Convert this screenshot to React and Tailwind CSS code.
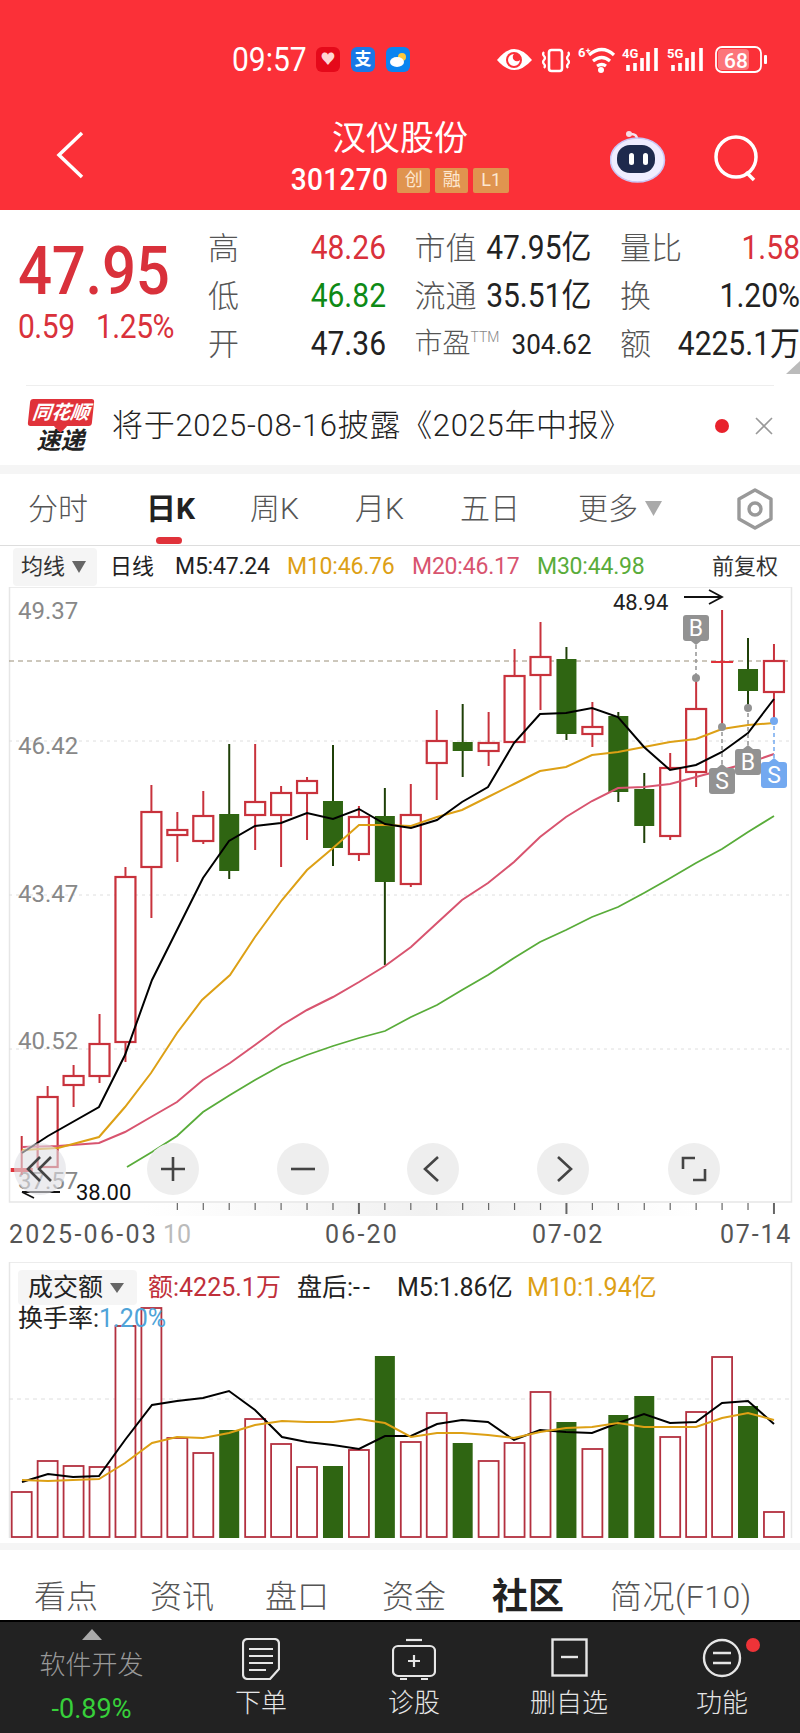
import React from "react";

const RED = "#C8323C";
const GREEN = "#2F6512";

// wick top, body top, body bottom, wick bottom, colour
const candles = [
  [1136, 1168, 1172, 1175, "r"],
  [1086, 1097, 1167, 1167, "r"],
  [1065, 1076, 1085, 1107, "r"],
  [1014, 1044, 1076, 1083, "r"],
  [867, 877, 1042, 1062, "r"],
  [785, 812, 867, 918, "r"],
  [812, 830, 835, 862, "r"],
  [791, 816, 841, 844, "r"],
  [744, 814, 871, 879, "g"],
  [744, 802, 815, 850, "r"],
  [786, 793, 815, 867, "r"],
  [777, 781, 793, 840, "r"],
  [745, 801, 848, 866, "g"],
  [806, 817, 854, 861, "r"],
  [788, 816, 882, 965, "g"],
  [784, 815, 884, 887, "r"],
  [710, 741, 763, 800, "r"],
  [704, 742, 751, 777, "g"],
  [712, 743, 751, 766, "r"],
  [649, 676, 742, 742, "r"],
  [622, 657, 675, 710, "r"],
  [647, 659, 734, 740, "g"],
  [702, 727, 734, 747, "r"],
  [712, 716, 792, 802, "g"],
  [773, 789, 826, 843, "g"],
  [753, 768, 836, 840, "r"],
  [678, 709, 772, 787, "r"],
  [610, 661, 663, 727, "r"],
  [638, 669, 691, 708, "g"],
  [644, 661, 692, 720, "r"],
];

const volumes = [
  1492, 1461, 1466, 1467, 1326, 1308, 1438, 1453, 1430, 1419, 1444, 1467, 1466, 1450, 1356,
  1442, 1413, 1443, 1461, 1443, 1392, 1422, 1449, 1415, 1396, 1437, 1412, 1357, 1406, 1512,
];

const ma5 = "22,1153 48,1136 99,1107 125,1055 152,980 203,878 229,841 255,826 281,823 307,813 333,819 359,809 385,824 411,828 437,820 462,802 488,787 514,743 540,714 566,713 592,708 618,717 644,747 670,770 696,765 722,752 748,733 774,699";
const ma10 = "22,1150 58,1148 99,1137 125,1107 151,1073 177,1033 202,1000 230,975 255,937 282,900 307,870 333,848 359,825 385,825 411,826 437,817 462,810 488,797 514,784 540,771 566,767 592,755 618,752 644,747 670,742 696,739 722,729 748,725 774,723";
const ma20 = "22,1147 58,1146 99,1143 125,1132 151,1117 177,1102 203,1080 230,1063 255,1045 282,1025 307,1010 333,997 359,982 385,966 411,947 437,923 462,900 488,883 514,862 540,837 566,817 592,801 618,788 644,787 670,784 696,777 722,770 748,763 774,754";
const ma30 = "127,1167 152,1152 177,1136 203,1112 230,1095 255,1080 282,1065 307,1055 333,1046 359,1038 385,1031 411,1017 437,1005 462,990 488,975 514,958 540,942 566,930 592,917 618,907 644,893 667,880 696,863 722,849 748,832 774,816";
const volMa5 = "22,1482 48,1474 73,1477 99,1476 125,1440 152,1405 177,1401 203,1398 229,1391 255,1410 282,1437 307,1442 333,1445 359,1449 385,1436 411,1436 437,1424 462,1420 488,1422 514,1440 540,1430 566,1432 592,1433 618,1423 644,1414 670,1423 696,1422 722,1403 748,1401 774,1424";
const volMa10 = "22,1480 48,1481 73,1480 99,1479 125,1463 152,1443 177,1437 203,1438 229,1433 255,1425 282,1421 307,1422 333,1422 359,1419 385,1423 411,1437 437,1433 462,1433 488,1435 514,1438 540,1432 566,1428 592,1427 618,1423 644,1427 670,1427 696,1427 722,1418 748,1413 774,1420";

const cx = (i) => 21.7 + 25.94 * i;

const Signal = ({ x, label }) => (
  <g>
    <text x={x} y="58" fontSize="13" fontWeight="700" fill="#fff" stroke="none">{label}</text>
    <path
      d={`M${x + 6} 71v-6M${x + 13} 71v-8M${x + 20} 71v-13M${x + 26} 71v-19M${x + 34} 71v-23`}
      strokeWidth="3.6"
    />
  </g>
);

const StatusBar = () => (
  <div className="flex h-[120px] items-center pl-[232px] pb-[1px]">
    <span className="inline-block w-[84px] origin-center scale-y-[1.12] text-[30px] leading-none text-white">09:57</span>
    <div className="flex gap-[11px]">
      <div className="flex h-[25px] w-[24px] items-center justify-center rounded-[6px] bg-[#E5091A] text-[15px] leading-none text-[#ffd5d5]">♥</div>
      <div className="flex h-[25px] w-[24px] items-center justify-center rounded-[6px] bg-[#1A78E6] text-[17px] font-bold leading-none text-white">支</div>
      <div className="flex h-[25px] w-[24px] items-center justify-center rounded-[6px] bg-[#0A84F0]">
        <svg width="18" height="16" viewBox="0 0 18 16">
          <circle cx="13" cy="5" r="4" fill="#FFC93C" />
          <ellipse cx="8" cy="10" rx="7" ry="5" fill="#fff" />
        </svg>
      </div>
    </div>
    <svg className="ml-[87px]" width="272" height="30" viewBox="497 45 272 30" fill="none" stroke="#fff">
      {/* eye */}
      <path d="M497 60 Q514 38 532 60 Q514 80 497 60Z" fill="#fff" stroke="none" />
      <circle cx="514" cy="60" r="8" fill="#FB3038" stroke="none" />
      <path d="M514 54a6 6 0 1 0 6 6a4 4 0 0 1-6-6Z" fill="#fff" stroke="none" />
      {/* vibrate */}
      <rect x="549" y="50" width="13" height="21" rx="2.5" strokeWidth="2.6" />
      <path d="M544 52q-2 2 0 4q2 2 0 4q-2 2 0 4q2 2 0 4M568 52q2 2 0 4q-2 2 0 4q2 2 0 4q-2 2 0 4" strokeWidth="2.2" />
      {/* wifi */}
      <text x="578" y="57" fontSize="13" fontWeight="700" fill="#fff" stroke="none">6⁺</text>
      <path d="M589 55q13-11 25 0M593 61q9-7 17 0M597 66q5-3 9 0" strokeWidth="3.2" />
      <circle cx="601" cy="70" r="3" fill="#fff" stroke="none" />
      <Signal x={622} label="4G" />
      <Signal x={667} label="5G" />
      {/* battery */}
      <rect x="716" y="47" width="45" height="25" rx="6" strokeWidth="1.8" />
      <rect x="718" y="49" width="31" height="21" rx="4" fill="#ffffff55" stroke="none" />
      <text x="724" y="68" fontSize="21" fontWeight="500" fill="#fff" stroke="none">68</text>
      <rect x="764" y="55" width="3" height="9" rx="1" fill="#fff" stroke="none" />
    </svg>
  </div>
);

const TitleBar = () => (
  <div className="relative flex h-[90px] flex-col items-center">
    <svg className="absolute left-[55px] top-[10px]" width="30" height="50" viewBox="0 0 30 50" fill="none" stroke="#fff" strokeWidth="3.5">
      <path d="M27 3 L4 25 L27 47" />
    </svg>
    <div className="text-[34px] leading-[36px] text-white">汉仪股份</div>
    <div className="mt-[10px] flex items-center">
      <span className="mr-[9px] inline-block scale-y-[1.1] text-[28px] font-medium leading-[28px] tracking-[0.3px] text-[#fff]">301270</span>
      <span className="mr-[5px] flex h-[25px] w-[33px] items-center justify-center rounded-[2px] bg-[#E0944F] text-[18px] leading-none text-[#fde7d0]">创</span>
      <span className="mr-[5px] flex h-[25px] w-[33px] items-center justify-center rounded-[2px] bg-[#E0944F] text-[18px] leading-none text-[#fde7d0]">融</span>
      <span className="flex h-[25px] w-[36px] items-center justify-center rounded-[2px] bg-[#E0944F] text-[18px] leading-none text-[#fde7d0]">L1</span>
    </div>
    {/* robot */}
    <svg className="absolute left-[610px] top-[11px]" width="56" height="52" viewBox="0 0 56 52">
      <path d="M27 8 Q27 3 21 3" stroke="#F3E6F3" strokeWidth="2.4" fill="none" />
      <circle cx="19" cy="3" r="3" fill="#F6DDE6" />
      <ellipse cx="27.5" cy="29" rx="27" ry="22" fill="#EFEDFF" />
      <ellipse cx="27.5" cy="29" rx="27" ry="22" fill="none" stroke="#C9C6F5" strokeWidth="1.5" />
      <rect x="7" y="14" width="38" height="28" rx="13" fill="#1E2A4D" />
      <rect x="19" y="22" width="5" height="12" rx="2.5" fill="#fff" />
      <rect x="33" y="22" width="5" height="12" rx="2.5" fill="#fff" />
    </svg>
    {/* search */}
    <svg className="absolute left-[713px] top-[14px]" width="50" height="50" viewBox="0 0 50 50" fill="none" stroke="#fff" strokeWidth="3.5">
      <circle cx="23" cy="23" r="20" />
      <path d="M33 38 L41 46" />
    </svg>
  </div>
);

const Quote = ({ label, value, valueClass = "text-[#222]" }) => (
  <div className="flex items-center justify-between">
    {label}
    <span className={`inline-block scale-y-[1.08] text-[30px] leading-none ${valueClass}`}>{value}</span>
  </div>
);

const Label = ({ children }) => <span className="text-[31px] font-light leading-none text-[#555]">{children}</span>;

const QuoteSection = () => (
  <div className="relative flex h-[175px]">
    <div className="w-[208px] pl-[18px] pt-[28px]">
      <div className="inline-block scale-y-[1.12] text-[60px] font-medium leading-[68px] tracking-[-0.3px] text-[#D9313B]">47.95</div>
      <div className="mt-[3px] flex text-[30px] leading-[36px] tracking-[-0.5px] text-[#D9313B]">
        <span className="w-[78px] inline-block scale-y-[1.08] origin-left">0.59</span>
        <span className="inline-block scale-y-[1.08]">1.25%</span>
      </div>
    </div>
    <div className="grid grid-cols-[178px_177px_180px] gap-x-[28.5px] pt-[14px] auto-rows-[48px] items-center">
      <Quote label={<Label>高</Label>} value="48.26" valueClass="text-[#D9313B]" />
      <Quote label={<Label>市值</Label>} value="47.95亿" />
      <Quote label={<Label>量比</Label>} value="1.58" valueClass="text-[#D9313B]" />
      <Quote label={<Label>低</Label>} value="46.82" valueClass="text-[#0E8A16]" />
      <Quote label={<Label>流通</Label>} value="35.51亿" />
      <Quote label={<Label>换</Label>} value="1.20%" />
      <Quote label={<Label>开</Label>} value="47.36" />
      <div className="flex items-center justify-between">
        <span className="flex items-start">
          <span className="text-[28px] font-light leading-none text-[#555]">市盈</span>
          <span className="text-[14px] font-light leading-none text-[#888]">TTM</span>
        </span>
        <span className="inline-block scale-y-[1.08] text-[26px] leading-none text-[#222]">304.62</span>
      </div>
      <Quote label={<Label>额</Label>} value="4225.1万" />
    </div>
    <svg className="absolute right-0 top-[151px]" width="20" height="13" viewBox="0 0 20 13">
      <path d="M20 0 V13 H6Z" fill="#bbb" />
    </svg>
  </div>
);

const Notice = () => (
  <div className="mx-[26px] flex h-[80px] items-center border-t border-[#eee]">
    <div className="relative ml-[2px] flex h-[54px] w-[65px] flex-col items-center">
      <div className="flex h-[28px] w-[64px] -skew-x-6 items-center justify-center rounded-[3px] bg-[#E0323A] text-[19px] font-bold italic leading-none text-white">同花顺</div>
      <div className="absolute left-[28px] top-[23px] h-[9px] w-[9px] rotate-45 bg-[#E0323A]" />
      <div className="mt-[3px] text-[24px] font-bold italic leading-[24px] text-[#222]">速递</div>
    </div>
    <div className="ml-[19px] w-[603px] text-[31px] font-light leading-none tracking-[0.7px] text-[#222]">将于2025-08-16披露《2025年中报》</div>
    <div className="h-[14px] w-[14px] rounded-full bg-[#E8222C]" />
    <svg className="ml-[26px]" width="18" height="18" viewBox="0 0 18 18" stroke="#999" strokeWidth="1.6">
      <path d="M1 1L17 17M17 1L1 17" />
    </svg>
  </div>
);

const Tabs = () => (
  <div className="flex h-[72px] items-center border-b border-[#ddd] pb-[2px] pl-[28px] text-[30px] font-light leading-none text-[#555]">
    <span className="w-[118px]">分时</span>
    <span className="relative flex h-full w-[104px] items-center font-bold text-[#222]">
      日K
      <span className="absolute bottom-[-1px] left-[10px] h-[7px] w-[26px] rounded-full bg-[#E0323A]" />
    </span>
    <span className="w-[105px]">周K</span>
    <span className="w-[105px]">月K</span>
    <span className="w-[118px]">五日</span>
    <span className="w-[67px]">更多</span>
    <svg width="17" height="15" viewBox="0 0 17 15"><path d="M0 0H17L8.5 15Z" fill="#aaa" /></svg>
    <svg className="ml-[74px]" width="38" height="42" viewBox="0 0 38 42" fill="none" stroke="#999" strokeWidth="3.4">
      <path d="M19 2 L35 11 V31 L19 40 L3 31 V11Z" strokeLinejoin="round" />
      <circle cx="19" cy="21" r="6" />
    </svg>
  </div>
);

const Legend = () => (
  <div className="flex h-[41px] items-center pl-[13px] text-[23px] leading-none">
    <div className="flex h-[38px] w-[84px] items-center rounded-[4px] bg-[#f5f5f5] pl-[8px] text-[22px] text-[#333]">
      均线
      <svg className="ml-[7px]" width="14" height="12" viewBox="0 0 14 12"><path d="M0 0H14L7 12Z" fill="#666" /></svg>
    </div>
    <span className="ml-[13px] text-[22px] text-[#222]">日线</span>
    <span className="ml-[21px] w-[112px] tracking-[-0.2px] text-[#222]">M5:47.24</span>
    <span className="w-[125px] tracking-[-0.2px] text-[#DDA015]">M10:46.76</span>
    <span className="w-[125px] tracking-[-0.2px] text-[#D8546F]">M20:46.17</span>
    <span className="w-[175px] tracking-[-0.2px] text-[#59AC3A]">M30:44.98</span>
    <span className="text-[22px] text-[#333]">前复权</span>
  </div>
);

const Marker = ({ x, y, label, color, up, dotY }) => {
  const tipY = up ? y - 4 : y + 30;
  return (
    <g>
      <line x1={x} y1={up ? y - 4 : y + 30} x2={x} y2={dotY} stroke={color} strokeWidth="1.5" strokeDasharray="4 3" />
      <circle cx={x} cy={dotY} r="4" fill={color} />
      <rect x={x - 13} y={y} width="26" height="26" rx="3" fill={color} />
      <path d={`M${x - 5} ${up ? y : y + 26} L${x} ${tipY} L${x + 5} ${up ? y : y + 26}Z`} fill={color} />
      <text x={x} y={y + 21} textAnchor="middle" fontSize="23" fill="#fff">{label}</text>
    </g>
  );
};

const CandleChart = () => (
  <svg className="block" width="800" height="629" viewBox="0 587 800 629" fontFamily="Roboto, sans-serif">
    <defs>
      <linearGradient id="fade" x1="0" x2="1" y1="0" y2="0">
        <stop offset="0" stopColor="#f1f1f1" stopOpacity="0" />
        <stop offset="0.5" stopColor="#f1f1f1" />
        <stop offset="1" stopColor="#f1f1f1" stopOpacity="0" />
      </linearGradient>
    </defs>
    <rect x="143" y="1203" width="560" height="13" fill="url(#fade)" />
    <path d="M9.5 587H791.5V1202H9.5Z" fill="none" stroke="#e6e6e6" strokeWidth="1.5" />
    <line x1="9" x2="791" y1="661" y2="661" stroke="#9a8f78" strokeDasharray="5 4" />
    {[741, 895, 1049].map((y) => (
      <line key={y} x1="9" x2="791" y1={y} y2={y} stroke="#dedede" strokeDasharray="3 4" />
    ))}
    {[["49.37", 619], ["46.42", 754], ["43.47", 902], ["40.52", 1049], ["37.57", 1189]].map(([t, y]) => (
      <text key={t} x="18" y={y} fontSize="24" fill="#888">{t}</text>
    ))}
    {candles.map(([wt, bt, bb, wb, c], i) => {
      const x = cx(i);
      if (c === "g") {
        return (
          <g key={i}>
            <line x1={x} x2={x} y1={wt} y2={wb} stroke="#1F4008" strokeWidth="2" />
            <rect x={x - 10} y={bt} width="20" height={bb - bt} fill={GREEN} />
          </g>
        );
      }
      if (bb - bt < 5) {
        return (
          <g key={i}>
            <line x1={x} x2={x} y1={wt} y2={wb} stroke={RED} strokeWidth="2" />
            <rect x={x - 11} y={bt} width="22" height={bb - bt} fill="#E0323A" />
          </g>
        );
      }
      return (
        <g key={i}>
          <line x1={x} x2={x} y1={wt} y2={wb} stroke={RED} strokeWidth="2" />
          <rect x={x - 10} y={bt} width="20" height={bb - bt} fill="#fff" stroke={RED} strokeWidth="2.2" />
        </g>
      );
    })}
    <polyline points={ma30} fill="none" stroke="#59AC3A" strokeWidth="1.8" />
    <polyline points={ma20} fill="none" stroke="#D8546F" strokeWidth="2" />
    <polyline points={ma10} fill="none" stroke="#DDA015" strokeWidth="2" />
    <polyline points={ma5} fill="none" stroke="#000" strokeWidth="2" />
    <Marker x={696} y={615} label="B" color="#929292" dotY={678} />
    <Marker x={722} y={768} label="S" color="#929292" up dotY={727} />
    <Marker x={748} y={749} label="B" color="#929292" up dotY={708} />
    <Marker x={774} y={762} label="S" color="#73A9F0" up dotY={721} />
    <text x="613" y="610" fontSize="22" fill="#222">48.94</text>
    <path d="M684 597H721M709 590L722 597L709 604" fill="none" stroke="#111" strokeWidth="1.8" />
    <text x="76" y="1200" fontSize="22" fill="#111">38.00</text>
    <path d="M60 1192H22M34 1198L22 1192" fill="none" stroke="#111" strokeWidth="1.8" />
    {candles.slice(6).map((_, j) => {
      const i = j + 6;
      const big = i === 13 || i === 21 || i === 29;
      return <line key={i} x1={cx(i)} x2={cx(i)} y1="1203" y2={big ? 1214 : 1210} stroke="#666" strokeWidth={big ? 2 : 1.2} />;
    })}
  </svg>
);

const RoundBtn = ({ className, children }) => (
  <div className={`flex h-[52px] w-[52px] items-center justify-center rounded-full bg-[#eeeeee] ${className}`}>
    <svg width="30" height="30" viewBox="0 0 30 30" fill="none" stroke="#444" strokeWidth="2.6">{children}</svg>
  </div>
);

const ChartSection = () => (
  <div className="relative">
    <CandleChart />
    <div className="absolute left-[14px] top-[556px] flex h-[52px] w-[52px] items-center justify-center rounded-full bg-[#dfe0e4]/60">
      <svg width="30" height="30" viewBox="0 0 30 30" fill="none" stroke="#444" strokeWidth="2.6">
        <path d="M15 3L3 15L15 27M26 3L14 15L26 27" />
      </svg>
    </div>
    <div className="absolute left-[147px] top-[556px] flex">
      <RoundBtn className=""><path d="M3 15H27M15 3V27" /></RoundBtn>
      <RoundBtn className="ml-[78px]"><path d="M3 15H27" /></RoundBtn>
      <RoundBtn className="ml-[78px]"><path d="M20 3L7 15L20 27" /></RoundBtn>
      <RoundBtn className="ml-[78px]"><path d="M10 3L23 15L10 27" /></RoundBtn>
      <RoundBtn className="ml-[79px]"><path d="M4 15V4H16M26 15V26H14" /></RoundBtn>
    </div>
  </div>
);

const DateRow = () => (
  <div className="flex h-[46px] pl-[9px] pt-[4px] text-[25px] leading-[30px] tracking-[1.8px] text-[#555]">
    <span className="w-[154px] tracking-[2.3px]">2025-06-03</span>
    <span className="w-[162px] tracking-[0px] text-[#bbb]">10</span>
    <span className="w-[207px] tracking-[2.2px]">06-20</span>
    <span className="w-[188px]">07-02</span>
    <span>07-14</span>
  </div>
);

const VolumeSection = () => (
  <div className="relative h-[281px]">
    <svg className="block" width="800" height="281" viewBox="0 1262 800 281">
      <path d="M9.5 1262H791.5V1538" fill="none" stroke="#e6e6e6" strokeWidth="1.5" />
      <path d="M9.5 1262V1538" fill="none" stroke="#e6e6e6" strokeWidth="1.5" />
      <line x1="9" x2="791" y1="1399" y2="1399" stroke="#dedede" strokeDasharray="4 4" />
      {volumes.map((top, i) => {
        const x = cx(i);
        return candles[i][4] === "g" ? (
          <rect key={i} x={x - 10} y={top} width="20" height={1538 - top} fill={GREEN} />
        ) : (
          <rect key={i} x={x - 10} y={top} width="20" height={1537 - top} fill="#fff" stroke="#B3303F" strokeWidth="1.8" />
        );
      })}
      <polyline points={volMa5} fill="none" stroke="#000" strokeWidth="2" />
      <polyline points={volMa10} fill="none" stroke="#DDA015" strokeWidth="2" />
    </svg>
    <div className="absolute left-[18px] top-[8px] flex h-[35px] w-[119px] items-center rounded-[4px] bg-[#f5f5f5] pl-[10px] text-[25px] leading-none text-[#222]">
      成交额
      <svg className="ml-[7px]" width="14" height="10" viewBox="0 0 14 10"><path d="M0 0H14L7 10Z" fill="#666" /></svg>
    </div>
    <div className="absolute left-[148px] top-[8px] flex h-[35px] items-center text-[25px] leading-none">
      <span className="w-[149px] text-[#C0303A]">额:4225.1万</span>
      <span className="w-[100px] text-[#222]">盘后:<span className="tracking-[3px]">--</span></span>
      <span className="w-[130px] text-[#222]">M5:1.86亿</span>
      <span className="text-[#DDA015]">M10:1.94亿</span>
    </div>
    <div className="absolute left-[18px] top-[42px] text-[25px] leading-[30px] text-[#222]">
      换手率:<span className="text-[#4FA3D8]">1.20%</span>
    </div>
  </div>
);

const SubTabs = () => (
  <div className="flex h-[70px] items-center pl-[34px] pt-[24px] text-[32px] font-light leading-none text-[#555]">
    <span>看点</span>
    <span className="ml-[52px]">资讯</span>
    <span className="ml-[51px]">盘口</span>
    <span className="ml-[53px]">资金</span>
    <span className="ml-[46px] text-[36px] font-bold text-[#222]">社区</span>
    <span className="ml-[46px] tracking-[0.5px]">简况(F10)</span>
  </div>
);

const BarItem = ({ icon, label, className }) => (
  <div className={`flex flex-col items-center ${className}`}>
    <div className="h-[47px]">{icon}</div>
    <span className="mt-[3px] text-[26px] font-light leading-[30px] text-[#e6e6e6]">{label}</span>
  </div>
);

const BottomBar = () => (
  <div className="flex h-[113px] border-t-2 border-black bg-[#222]">
    <div className="flex w-[183px] flex-col items-center pt-[7px]">
      <svg width="20" height="11" viewBox="0 0 20 11"><path d="M10 0L20 11H0Z" fill="#aaa" /></svg>
      <span className="mt-[9px] text-[26px] font-light leading-[32px] text-[#999]">软件开发</span>
      <span className="mt-[13px] text-[27px] leading-[30px] text-[#37D03A]">-0.89%</span>
    </div>
    <div className="flex pt-[16px]">
      <BarItem
        className="w-[80px] ml-[38px]"
        label="下单"
        icon={
          <svg width="38" height="42" viewBox="0 0 38 42" fill="none" stroke="#e6e6e6" strokeWidth="2.2">
            <path d="M6 1H32Q37 1 37 6V31L28 41H6Q1 41 1 36V6Q1 1 6 1Z" />
            <path d="M7 11H31M7 18H31M7 25H31M7 32H24" />
          </svg>
        }
      />
      <BarItem
        className="w-[80px] ml-[73px]"
        label="诊股"
        icon={
          <svg width="44" height="42" viewBox="0 0 44 42" fill="none" stroke="#e6e6e6" strokeWidth="2.2">
            <path d="M14 2H30" />
            <rect x="1" y="8" width="42" height="30" rx="5" />
            <path d="M22 17V29M16 23H28M8 41H15M29 41H36" />
          </svg>
        }
      />
      <BarItem
        className="w-[80px] ml-[75px]"
        label="删自选"
        icon={
          <svg width="37" height="40" viewBox="0 0 37 40" fill="none" stroke="#e6e6e6" strokeWidth="2.4">
            <rect x="1.5" y="1.5" width="34" height="36" />
            <path d="M10 19H27" />
          </svg>
        }
      />
      <div className="relative ml-[73px]">
        <BarItem
          className="w-[80px]"
          label="功能"
          icon={
            <svg width="40" height="40" viewBox="0 0 40 40" fill="none" stroke="#e6e6e6" strokeWidth="2.4">
              <circle cx="20" cy="20" r="18" />
              <path d="M11 15H29M11 25H29" />
            </svg>
          }
        />
        <div className="absolute left-[64px] top-[0px] h-[14px] w-[14px] rounded-full bg-[#EE3338]" />
      </div>
    </div>
  </div>
);

export default function App() {
  return (
    <div className="h-[1733px] w-[800px] overflow-hidden bg-white font-[Roboto,'Noto_Sans_CJK_SC',sans-serif]">
      <div className="bg-[#FB3038]">
        <StatusBar />
        <TitleBar />
      </div>
      <QuoteSection />
      <Notice />
      <div className="h-[9px] bg-[#f5f5f5]" />
      <Tabs />
      <Legend />
      <ChartSection />
      <DateRow />
      <VolumeSection />
      <div className="h-[7px] bg-[#f5f5f5]" />
      <SubTabs />
      <BottomBar />
    </div>
  );
}
